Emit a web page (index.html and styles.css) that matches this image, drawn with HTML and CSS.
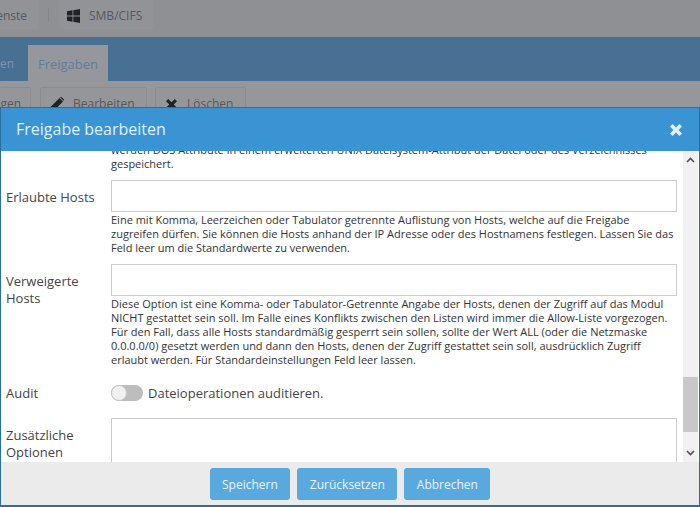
FILE: index.html
```html
<!DOCTYPE html>
<html lang="de">
<head>
<meta charset="utf-8">
<title>Freigabe bearbeiten</title>
<link rel="stylesheet" href="styles.css">
</head>
<body>
<div class="page">
  <div class="topbar">
    <div class="crumb crumb-first">enste</div>
    <div class="sep"></div>
    <div class="crumb crumb-smb">
      <svg class="win" viewBox="0 0 13 14" width="13" height="14"><path d="M0 2.2 5.5 1.3V6.6H0ZM6.3 1.2 13 0V6.6H6.3ZM0 7.4H5.5V12.7L0 11.8ZM6.3 7.4H13V14L6.3 12.8Z"/></svg>
      <span>SMB/CIFS</span>
    </div>
  </div>
  <div class="tabs">
    <div class="tab">en</div>
    <div class="tab tab-active">Freigaben</div>
  </div>
  <div class="toolbar">
    <div class="tool tool-first">gen</div>
    <div class="tool tool-edit">
      <svg viewBox="0 0 15 15" width="15" height="15"><path d="M0 15 1 10.5 10.5 1 14 4.5 4.5 14ZM11.3.3a1 1 0 0 1 1.4 0L14.7 2.3a1 1 0 0 1 0 1.4L14.6 3.8 11.2.4Z"/></svg>
      <span>Bearbeiten</span>
    </div>
    <div class="tool tool-del">
      <svg viewBox="0 0 12 12" width="11" height="11"><path d="M2.4 0 6 3.6 9.6 0 12 2.4 8.4 6 12 9.6 9.6 12 6 8.4 2.4 12 0 9.6 3.6 6 0 2.4Z"/></svg>
      <span>Löschen</span>
    </div>
  </div>
</div>

<div class="modal">
  <header class="modal-head">
    <h1>Freigabe bearbeiten</h1>
    <svg class="close" viewBox="0 0 12 12" width="12" height="12"><path d="M2.6 0 6 3.4 9.4 0 12 2.6 8.6 6 12 9.4 9.4 12 6 8.6 2.6 12 0 9.4 3.4 6 0 2.6Z"/></svg>
  </header>
  <div class="modal-mid">
    <div class="scroller">
      <div class="content">
        <div class="row row-prev">
          <div class="label"></div>
          <div class="field"><p class="help">werden DOS Attribute in einem erweiterten UNIX Dateisystem-Attribut der Datei oder des Verzeichnisses gespeichert.</p></div>
        </div>
        <div class="row row-allow">
          <label class="label label-single">Erlaubte Hosts</label>
          <div class="field">
            <div class="input"></div>
            <p class="help">Eine mit Komma, Leerzeichen oder Tabulator getrennte Auflistung von Hosts, welche auf die Freigabe zugreifen dürfen. Sie können die Hosts anhand der IP Adresse oder des Hostnamens festlegen. Lassen Sie das Feld leer um die Standardwerte zu verwenden.</p>
          </div>
        </div>
        <div class="row row-deny">
          <label class="label">Verweigerte Hosts</label>
          <div class="field">
            <div class="input"></div>
            <p class="help">Diese Option ist eine Komma- oder Tabulator-Getrennte Angabe der Hosts, denen der Zugriff auf das Modul NICHT gestattet sein soll. Im Falle eines Konflikts zwischen den Listen wird immer die Allow-Liste vorgezogen. Für den Fall, dass alle Hosts standardmäßig gesperrt sein sollen, sollte der Wert ALL (oder die Netzmaske 0.0.0.0/0) gesetzt werden und dann den Hosts, denen der Zugriff gestattet sein soll, ausdrücklich Zugriff erlaubt werden. Für Standardeinstellungen Feld leer lassen.</p>
          </div>
        </div>
        <div class="row row-audit">
          <label class="label">Audit</label>
          <div class="field field-audit">
            <span class="switch"><span class="knob"></span></span>
            <span class="switch-text">Dateioperationen auditieren.</span>
          </div>
        </div>
        <div class="row row-extra">
          <label class="label">Zusätzliche Optionen</label>
          <div class="field"><div class="input input-tall"></div></div>
        </div>
      </div>
    </div>
    <div class="scrollbar">
      <svg class="arrow arrow-up" viewBox="0 0 9 6" width="9" height="6"><path d="M1 5 4.5 1.5 8 5" /></svg>
      <div class="track"><div class="thumb"></div></div>
      <svg class="arrow arrow-down" viewBox="0 0 9 6" width="9" height="6"><path d="M1 1 4.5 4.5 8 1" /></svg>
    </div>
  </div>
  <footer class="modal-foot">
    <button class="btn" type="button">Speichern</button>
    <button class="btn" type="button">Zurücksetzen</button>
    <button class="btn" type="button">Abbrechen</button>
  </footer>
</div>
</body>
</html>
```
FILE: styles.css
```css
* { box-sizing: border-box; }
html, body { margin: 0; padding: 0; height: 100%; overflow: hidden; }
body {
  position: relative;
  width: 700px;
  height: 507px;
  font-family: "Open Sans", sans-serif;
  background: #8f9095;
  color: #333;
}
.page { height: 507px; overflow: hidden; }
.topbar {
  height: 37px;
  background: #8e9094;
  display: flex;
  align-items: stretch;
}
.crumb {
  display: flex;
  align-items: center;
  height: 29px;
  background: #929397;
  color: #55585e;
  font-size: 12px;
  padding-top: 2px;
}
.crumb-first { width: 39px; justify-content: flex-end; padding-right: 12px; border-radius: 0 0 3px 0; overflow: hidden; }
.sep { width: 1px; height: 14px; margin: 8px 10px 0 9px; background: #84868a; }
.crumb-smb { width: 94px; padding-left: 8px; gap: 9px; border-radius: 0 0 3px 3px; }
.win { fill: #1f2226; }
.tabs {
  height: 44px;
  background: #477093;
  display: flex;
  align-items: flex-end;
}
.tab {
  height: 36px;
  width: 28px;
  font-size: 12px;
  line-height: 38px;
  color: #7d96ab;
  text-align: right;
  padding-right: 15px;
  white-space: nowrap;
}
.tab-active {
  width: 80px;
  background: #95979c;
  color: #5d7f9d;
  padding: 0;
  text-align: center;
  font-size: 13px;
}
.tab:first-child { overflow: hidden; padding-right: 14px; }
.toolbar {
  height: 50px;
  background: #96979b;
  padding-top: 6px;
  display: flex;
  gap: 8px;
  align-items: flex-start;
}
.tool {
  height: 32px;
  border: 1px solid #8b8c90;
  border-radius: 2px;
  background: #95969a;
  color: #55585e;
  font-size: 12px;
  line-height: 32px;
  display: flex;
  align-items: flex-start;
}
.tool svg { fill: #1f2226; flex: none; margin-top: 9px; }
.tool-first { width: 31px; margin-right: 1px; border-left: 0; justify-content: flex-end; padding-right: 9px; }
.tool-edit { width: 107px; padding-left: 8px; gap: 9px; }
.tool-del { width: 91px; padding-left: 10px; gap: 10px; }
.tool-del svg { margin-top: 11px; }

.modal {
  position: absolute;
  left: 0;
  top: 107px;
  width: 700px;
  height: 400px;
  border: 1px solid #2b6f9f;
  border-bottom-width: 2px;
  display: flex;
  flex-direction: column;
  background: #fff;
}
.modal-head {
  height: 43px;
  flex: none;
  background: #3a94d3;
  display: flex;
  align-items: center;
  justify-content: space-between;
  padding: 0 17px 2px 15px;
  position: relative;
  z-index: 1;
}
.modal-head h1 {
  margin: 0;
  font-size: 16px;
  font-weight: 400;
  color: #dff1fb;
}
.close { fill: #dff1fb; margin-top: 2px; }
.modal-mid {
  flex: 1;
  min-height: 0;
  display: flex;
  overflow: hidden;
}
.scroller { flex: 1; min-width: 0; overflow: hidden; }
.content { margin-top: -8px; padding: 0 5px; }
.row { display: flex; }
.label {
  width: 105px;
  flex: none;
  font-size: 13px;
  line-height: 17px;
  color: #444;
  padding-right: 8px;
}
.field { width: 566px; flex: none; }
.help {
  margin: 0;
  font-size: 11px;
  line-height: 14px;
  color: #333;
}
.input {
  height: 32px;
  border: 1px solid #ccc;
  background: #fff;
}
.input-tall { height: 60px; }
.row-allow { margin-top: 9px; }
.row-allow .label { padding-top: 9px; }
.row-allow .help { margin-top: 1px; }
.row-deny { margin-top: 9px; }
.row-deny .label { padding-top: 9px; }
.row-deny .help { margin-top: 1px; }
.row-audit { margin-top: 18px; }
.row-audit .label { line-height: 16px; }
.field-audit { display: flex; align-items: center; gap: 5px; height: 16px; }
.switch {
  width: 32px;
  height: 16px;
  border-radius: 8px;
  background: #bdbdbd;
  display: block;
  flex: none;
  position: relative;
}
.knob {
  position: absolute;
  left: 0;
  top: 0;
  width: 16px;
  height: 16px;
  border-radius: 50%;
  background: #f1f1f1;
  border: 1px solid #c9c9c9;
}
.switch-text { font-size: 13px; color: #444; }
.row-extra { margin-top: 17px; }
.row-extra .label { padding-top: 9px; }
.scrollbar {
  width: 15px;
  flex: none;
  margin-right: 1px;
  background: #f1f1f1;
  display: flex;
  flex-direction: column;
  align-items: center;
}
.arrow { flex: none; fill: none; stroke: #505050; stroke-width: 1.6; }
.arrow-up { margin: 6px 0 5px; }
.arrow-down { margin: 5px 0 6px; }
.track { flex: 1; width: 100%; position: relative; }
.thumb {
  position: absolute;
  left: 0;
  right: 0;
  top: 209px;
  height: 55px;
  background: #c8c8c8;
}
.modal-foot {
  height: 43px;
  flex: none;
  background: #ebebeb;
  display: flex;
  justify-content: center;
  align-items: flex-start;
  padding: 6px 0 0 0;
  gap: 7px;
}
.btn {
  height: 32px;
  padding: 0 12.5px;
  border: 0;
  border-radius: 3px;
  background: #5aa9de;
  color: #e8f4fb;
  font-family: "Open Sans", sans-serif;
  font-size: 12px;
}
```
